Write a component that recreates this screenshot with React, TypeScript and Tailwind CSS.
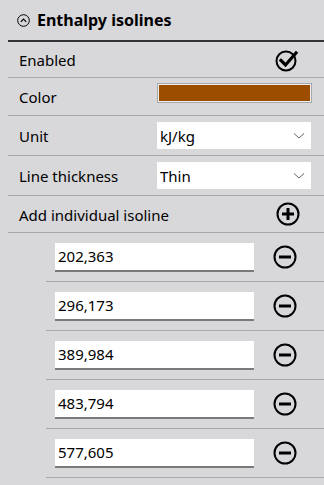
import React from 'react'

const font = { fontFamily: '"Noto Sans", sans-serif' }

const MinusIcon = () => (
  <svg width="24" height="24" viewBox="0 0 24 24" fill="none">
    <circle cx="12" cy="12" r="10.5" stroke="#000" strokeWidth="2" />
    <rect x="6" y="10.5" width="12" height="3" fill="#000" />
  </svg>
)

const PlusIcon = () => (
  <svg width="24" height="24" viewBox="0 0 24 24" fill="none">
    <circle cx="12" cy="12" r="10.5" stroke="#000" strokeWidth="2" />
    <rect x="6" y="10.5" width="12" height="3" fill="#000" />
    <rect x="10.5" y="6" width="3" height="12" fill="#000" />
  </svg>
)

const CheckIcon = () => (
  <svg width="24" height="24" viewBox="0 0 24 24" fill="none">
    <circle cx="11" cy="13" r="9.5" stroke="#000" strokeWidth="2" />
    <path d="M6 12.5 L10.5 17 L21 5" stroke="#000" strokeWidth="3.2" strokeLinecap="square" />
  </svg>
)

const Chevron = () => (
  <svg width="12" height="8" viewBox="0 0 12 8" fill="none">
    <path d="M1 1.5 L6 6 L11 1.5" stroke="#666" strokeWidth="1" />
  </svg>
)

const Row = ({ label, children, h }: { label: string; children?: React.ReactNode; h: string }) => (
  <div className={`ml-2 flex items-center border-b border-[#a8a8a8] pl-[11px] ${h}`}>
    <span className="w-[138px] shrink-0 whitespace-nowrap pt-[2px] text-[15px] text-black">{label}</span>
    <div className="flex flex-1 items-center">{children}</div>
  </div>
)

const Select = ({ value }: { value: string }) => (
  <div className="flex h-[27px] w-[154px] items-center justify-between bg-white pl-[3px] pr-[6px] text-[15px] text-black">
    <span className="pt-px">{value}</span>
    <Chevron />
  </div>
)

const valores = ['202,363', '296,173', '389,984', '483,794', '577,605']

export default function App() {
  return (
    <div className="h-[485px] w-[324px] overflow-hidden bg-[#d8d7da]" style={font}>
      <div className="ml-2 flex h-[42px] items-center gap-[7px] border-b-2 border-[#333] pl-[9px]">
        <svg width="13" height="13" viewBox="0 0 13 13" fill="none">
          <circle cx="6.5" cy="6.5" r="5.8" stroke="#000" strokeWidth="1" />
          <path d="M3.8 7.8 L6.5 5 L9.2 7.8" stroke="#000" strokeWidth="1.2" />
        </svg>
        <span className="text-[16px] font-bold text-black">Enthalpy isolines</span>
      </div>

      <Row label="Enabled" h="h-[36px]">
        <div className="ml-auto mr-[25px] flex"><CheckIcon /></div>
      </Row>
      <Row label="Color" h="h-[38px]">
        <div className="mb-[8px] h-[20px] w-[155px] border border-[#a8a8a8] bg-[#eeeeee] p-px">
          <div className="h-full w-full bg-[#9c4d00]" />
        </div>
      </Row>
      <Row label="Unit" h="h-[40px]">
        <Select value="kJ/kg" />
      </Row>
      <Row label="Line thickness" h="h-[40px]">
        <Select value="Thin" />
      </Row>
      <Row label="Add individual isoline" h="h-[37px]">
        <div className="ml-auto mr-[24px] flex"><PlusIcon /></div>
      </Row>

      {valores.map((v) => (
        <div key={v} className="ml-[46px] flex h-[49px] items-center border-b border-[#a8a8a8] pl-[9px]">
          <div className="flex h-[29px] w-[199px] items-center border-b-2 border-[#7a7a7a] bg-white pl-[3px] pt-px text-[15px] text-black">
            {v}
          </div>
          <div className="ml-[19px] flex"><MinusIcon /></div>
        </div>
      ))}
    </div>
  )
}
